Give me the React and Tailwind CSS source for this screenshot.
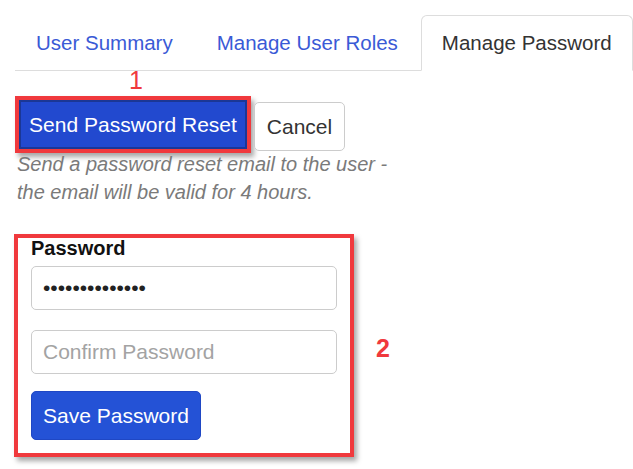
import { useState } from 'react';

const tabs = ['User Summary', 'Manage User Roles', 'Manage Password'];

export default function App() {
  const [active, setActive] = useState(2);
  const [password, setPassword] = useState('supersecret123');
  const [confirm, setConfirm] = useState('');

  return (
    <div
      className="relative w-[633px] h-[469px] bg-white overflow-hidden text-[#333]"
      style={{ fontFamily: '"Liberation Sans", Arial, sans-serif' }}
    >
      {/* Tabs */}
      <ul className="flex ml-[15px] mt-[15px] border-b border-[#ddd]">
        {tabs.map((tab, i) => (
          <li key={tab} className="shrink-0 mr-[2px] -mb-px">
            <button
              onClick={() => setActive(i)}
              className={
                i === active
                  ? 'block whitespace-nowrap px-[20px] py-[12px] text-[20.5px] leading-[30px] text-[#333] bg-white border border-[#ddd] border-b-transparent rounded-t-[6px]'
                  : 'block whitespace-nowrap px-[20px] py-[12px] text-[20.5px] leading-[30px] text-[#3a5ad6] border border-transparent rounded-t-[6px]'
              }
            >
              {tab}
            </button>
          </li>
        ))}
      </ul>

      {/* Send reset */}
      <div className="flex items-start ml-[15px] mt-[25px]">
        <div className="w-[236px] h-[57px] border-4 border-[#f0393d] shadow-[3px_4px_5px_rgba(0,0,0,0.35)]">
          <button className="w-full h-full whitespace-nowrap bg-[#2249cf] border-2 border-[#1b3796] text-white text-[21px] leading-[30px]">
            Send Password Reset
          </button>
        </div>
        <button className="ml-[3px] mt-[6px] w-[91px] h-[49px] bg-white border border-[#ccc] rounded-[5px] text-[21px] text-[#333]">
          Cancel
        </button>
      </div>
      <p className="ml-[17px] -mt-[3px] w-[375px] text-[20px] leading-[28px] italic text-[#7a7a7a]">
        Send a password reset email to the user - the email will be valid for 4 hours.
      </p>

      {/* Password form */}
      <div className="ml-[14px] mt-[28px] w-[340px] h-[223px] border-4 border-[#f0393d] shadow-[3px_4px_5px_rgba(0,0,0,0.35)] px-[13px]">
        <label className="block text-[20px] leading-[20px] font-bold text-[#111] mb-[8px]">
          Password
        </label>
        <input
          type="password"
          value={password}
          onChange={(e) => setPassword(e.target.value)}
          className="block w-[306px] h-[44px] px-[11px] border border-[#ccc] rounded-[5px] text-[21px] text-[#222] outline-none"
        />
        <input
          type="password"
          value={confirm}
          placeholder="Confirm Password"
          onChange={(e) => setConfirm(e.target.value)}
          className="block mt-[20px] w-[306px] h-[44px] px-[11px] border border-[#ccc] rounded-[5px] text-[21px] text-[#222] placeholder:text-[#a3a3a3] outline-none"
        />
        <button className="block mt-[17px] w-[170px] h-[49px] bg-[#2452d6] border border-[#1f47c4] rounded-[5px] text-white text-[21px]">
          Save Password
        </button>
      </div>

      {/* Annotations */}
      <span className="absolute left-[129px] top-[65px] text-[25px] leading-[30px] text-[#f0393d]">1</span>
      <span className="absolute left-[376px] top-[333px] text-[25px] leading-[30px] font-bold text-[#f0393d]">2</span>
    </div>
  );
}
